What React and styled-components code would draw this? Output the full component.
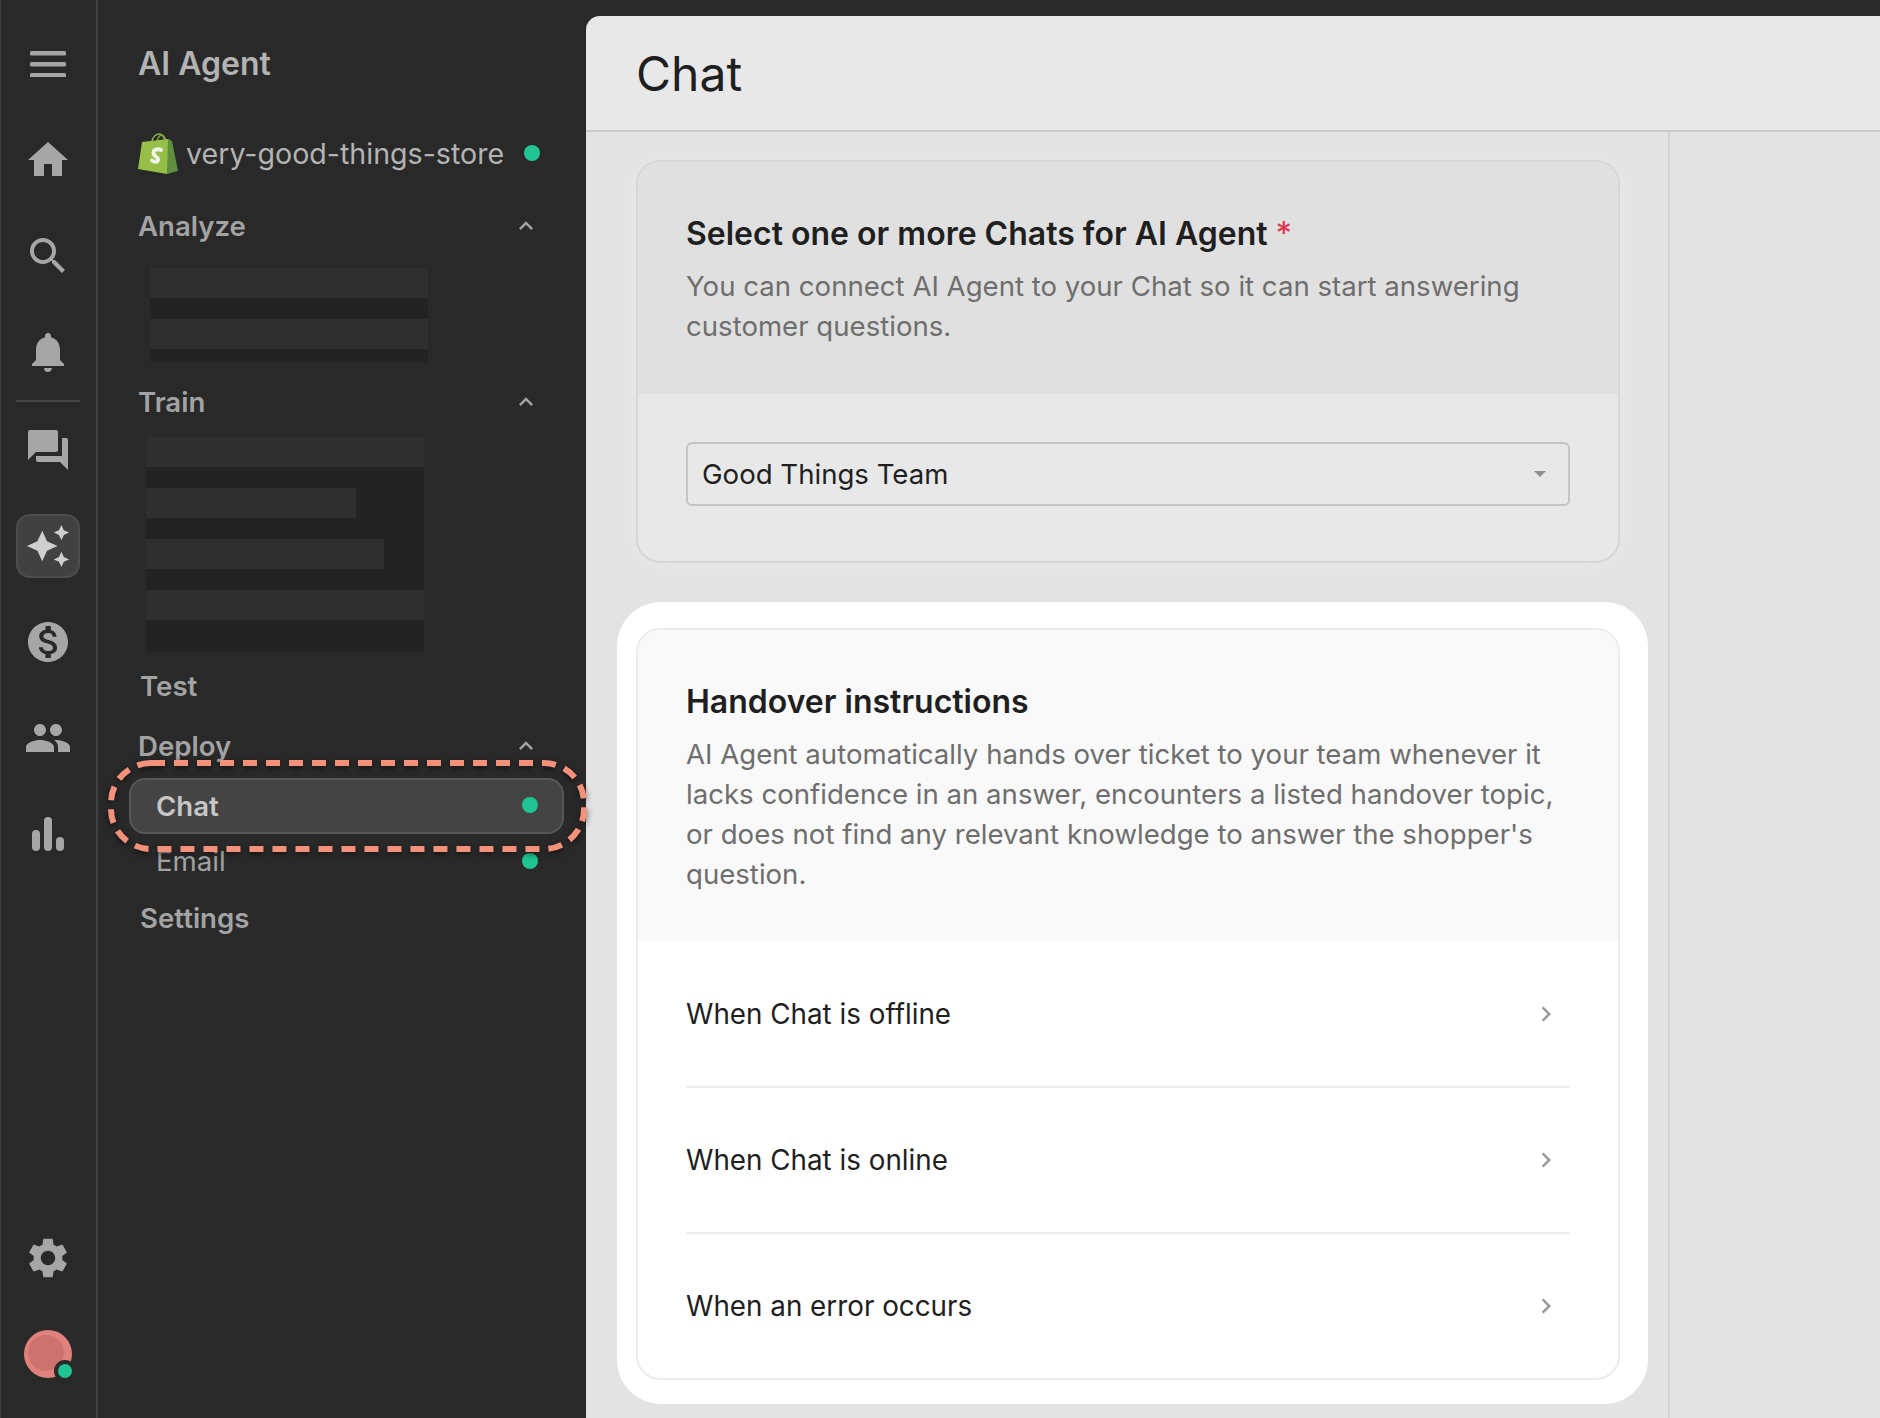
import styled, { createGlobalStyle } from 'styled-components';
import {
  MdHome,
  MdSearch,
  MdNotifications,
  MdForum,
  MdAutoAwesome,
  MdMonetizationOn,
  MdPeople,
  MdSettings,
  MdKeyboardArrowUp,
  MdChevronRight,
} from 'react-icons/md';

const EstilosGlobales = createGlobalStyle`
  html, body {
    background: #292929;
    height: 100%;
    margin: 0;
    overflow: hidden;
  }

  * {
    box-sizing: border-box;
  }

  #root {
    height: 100%;
  }
`;

const MenuIcon = () => (
  <svg width="36" height="26" viewBox="0 0 36 26" fill="#a6a6a6">
    <rect y="0" width="36" height="4.5" rx="1.5" />
    <rect y="11" width="36" height="4.5" rx="1.5" />
    <rect y="22" width="36" height="4.5" rx="1.5" />
  </svg>
);

const ChartIcon = () => (
  <svg width="32" height="34" viewBox="0 0 32 34" fill="#a6a6a6">
    <rect x="0" y="13" width="8" height="21" rx="4" />
    <rect x="12" y="0" width="8" height="34" rx="4" />
    <rect x="24" y="20" width="8" height="14" rx="4" />
  </svg>
);

const ShopifyLogo = () => (
  <svg width="41" height="42" viewBox="0 0 41 42">
    <path d="M14 9c1-4 4-7 7-7s5 3 6 7" fill="none" stroke="#8fb34a" strokeWidth="1.6" />
    <path d="M19 9c1-3 3-6 5-6s3 3 4 6" fill="none" stroke="#7da63c" strokeWidth="1.4" />
    <path d="M4 10l26-3 3 2-4 33L0 37z" fill="#95bf47" />
    <path d="M30 7l4 2 6 30-11 3z" fill="#5e8e3e" />
    <path d="M23 18c-1.500-1-7-1.500-7.500 2.500-.5 4 5 4 4.500 7.500-.4 2.500-4 2-6 .5" fill="none" stroke="#f2f2e8" strokeWidth="4" strokeLinecap="round" />
  </svg>
);

const App = () => (
  <>
    <EstilosGlobales />
    <Pagina>
      <Riel>
        <RielItem><MenuIcon /></RielItem>
        <RielItem><MdHome size={48} /></RielItem>
        <RielItem><MdSearch size={48} /></RielItem>
        <RielItem><MdNotifications size={48} /></RielItem>
        <RielDivisor />
        <RielItem><MdForum size={48} /></RielItem>
        <RielItem>
          <RielActivo><MdAutoAwesome size={46} /></RielActivo>
        </RielItem>
        <RielItem><MdMonetizationOn size={48} /></RielItem>
        <RielItem><MdPeople size={48} /></RielItem>
        <RielItem><ChartIcon /></RielItem>
        <RielAbajo>
          <RielItem><MdSettings size={48} /></RielItem>
          <RielItem>
            <Avatar>
              <AvatarCentro />
              <AvatarEstado />
            </Avatar>
          </RielItem>
        </RielAbajo>
      </Riel>

      <Barra>
        <BarraTitulo>AI Agent</BarraTitulo>
        <Tienda>
          <ShopifyLogo />
          <span>very-good-things-store</span>
          <Punto />
        </Tienda>

        <Seccion $mt={24}>
          Analyze
          <MdKeyboardArrowUp size={28} />
        </Seccion>
        <Esqueleto $mt={18} $ml={12} $alto={94}>
          <BarraGris $ancho={278} />
          <BarraGris $ancho={278} />
        </Esqueleto>

        <Seccion $mt={16}>
          Train
          <MdKeyboardArrowUp size={28} />
        </Seccion>
        <Esqueleto $mt={11} $ml={8} $alto={215}>
          <BarraGris $ancho={278} />
          <BarraGris $ancho={210} />
          <BarraGris $ancho={238} />
          <BarraGris $ancho={278} />
        </Esqueleto>

        <Enlace $mt={10}>Test</Enlace>
        <Seccion $mt={12}>
          Deploy
          <MdKeyboardArrowUp size={28} />
        </Seccion>

        <Pastilla>
          <span>Chat</span>
          <Punto />
          <Resalte width="479" height="92" viewBox="0 0 479 92">
            <rect
              x="3"
              y="3"
              width="473"
              height="86"
              rx="40"
              fill="none"
              stroke="#f4917b"
              strokeWidth="6"
              strokeDasharray="14 9"
            />
          </Resalte>
        </Pastilla>
        <SubEnlace>
          <span>Email</span>
          <Punto />
        </SubEnlace>
        <Enlace $mt={9}>Settings</Enlace>
      </Barra>

      <Principal>
        <Cabecera>
          <Titulo>Chat</Titulo>
        </Cabecera>
        <Contenido>
          <Columna>
            <Tarjeta $tenue>
              <TarjetaCabeza $tenue>
                <TarjetaTitulo>
                  Select one or more Chats for AI Agent <Requerido>*</Requerido>
                </TarjetaTitulo>
                <Descripcion>
                  You can connect AI Agent to your Chat so it can start answering
                  customer questions.
                </Descripcion>
              </TarjetaCabeza>
              <TarjetaCuerpo>
                <Selector>
                  Good Things Team
                  <Flechita />
                </Selector>
              </TarjetaCuerpo>
            </Tarjeta>

            <Foco>
              <Tarjeta>
                <TarjetaCabeza>
                  <TarjetaTitulo>Handover instructions</TarjetaTitulo>
                  <Descripcion>
                    AI Agent automatically hands over ticket to your team whenever it
                    lacks confidence in an answer, encounters a listed handover topic,
                    or does not find any relevant knowledge to answer the shopper's
                    question.
                  </Descripcion>
                </TarjetaCabeza>
                <Lista>
                  <Fila>
                    When Chat is offline
                    <MdChevronRight size={30} />
                  </Fila>
                  <Fila>
                    When Chat is online
                    <MdChevronRight size={30} />
                  </Fila>
                  <Fila>
                    When an error occurs
                    <MdChevronRight size={30} />
                  </Fila>
                </Lista>
              </Tarjeta>
            </Foco>
          </Columna>
          <PanelDerecho />
        </Contenido>
      </Principal>
    </Pagina>
  </>
);

export default App;

const Pagina = styled.div`
  background: #292929;
  display: flex;
  font-family: 'Inter', 'Liberation Sans', sans-serif;
  height: 1418px;
  overflow: hidden;
  width: 1880px;
`;

const Riel = styled.nav`
  align-items: center;
  border-left: 1px solid #3d3d3d;
  border-right: 2px solid #424242;
  color: #a6a6a6;
  display: flex;
  flex-direction: column;
  flex-shrink: 0;
  height: 100%;
  padding: 16px 2px 16px 0;
  width: 98px;
`;

const RielItem = styled.div`
  align-items: center;
  display: flex;
  flex-shrink: 0;
  height: 96px;
  justify-content: center;
  width: 100%;
`;

const RielDivisor = styled.div`
  background: #454545;
  flex-shrink: 0;
  height: 2px;
  width: 64px;
`;

const RielActivo = styled.div`
  align-items: center;
  background: #414141;
  border: 2px solid #4d4d4d;
  border-radius: 14px;
  color: #cfcfcf;
  display: flex;
  height: 64px;
  justify-content: center;
  width: 64px;
`;

const RielAbajo = styled.div`
  margin-top: auto;
  width: 100%;
`;

const Avatar = styled.div`
  align-items: center;
  background: #e0827b;
  border-radius: 50%;
  display: flex;
  height: 48px;
  justify-content: center;
  position: relative;
  width: 48px;
`;

const AvatarCentro = styled.div`
  background: #cc736e;
  border-radius: 50%;
  height: 36px;
  margin: -3px 0 0 -3px;
  width: 36px;
`;

const AvatarEstado = styled.div`
  background: #1fc492;
  border: 4px solid #292929;
  border-radius: 50%;
  bottom: -4px;
  height: 22px;
  position: absolute;
  right: -4px;
  width: 22px;
`;

const Barra = styled.aside`
  color: #a3a3a3;
  display: flex;
  flex-direction: column;
  flex-shrink: 0;
  padding-left: 40px;
  width: 488px;
`;

const BarraTitulo = styled.div`
  align-items: center;
  color: #b3b3b3;
  display: flex;
  font-size: 32px;
  font-weight: 600;
  height: 126px;
`;

const Tienda = styled.div`
  align-items: center;
  color: #b3b3b3;
  display: flex;
  font-size: 28.6px;
  gap: 7px;
  height: 50px;
  margin-top: 2px;
  padding-right: 46px;

  span:first-of-type {
    flex: 1;
  }
`;

const Punto = styled.i`
  background: #1fc492;
  border-radius: 50%;
  flex-shrink: 0;
  height: 16px;
  width: 16px;
`;

const Seccion = styled.div`
  align-items: center;
  display: flex;
  font-size: 27.6px;
  font-weight: 600;
  height: 48px;
  justify-content: space-between;
  margin-top: ${({ $mt }) => $mt}px;
  padding-right: 46px;
`;

const Esqueleto = styled.div`
  background: #232323;
  display: flex;
  flex-direction: column;
  gap: 21px;
  height: ${({ $alto }) => $alto}px;
  margin-left: ${({ $ml }) => $ml}px;
  margin-top: ${({ $mt }) => $mt}px;
  width: 278px;
`;

const BarraGris = styled.div`
  background: #2f2f2f;
  flex-shrink: 0;
  height: 30px;
  width: ${({ $ancho }) => $ancho}px;
`;

const Enlace = styled.div`
  align-items: center;
  display: flex;
  font-size: 27.6px;
  font-weight: 600;
  height: 48px;
  margin-top: ${({ $mt }) => $mt}px;
  padding-left: 2px;
`;

const Pastilla = styled.div`
  align-items: center;
  background: #444444;
  border: 2px solid #575757;
  border-radius: 16px;
  color: #c6c6c6;
  display: flex;
  font-size: 27.6px;
  font-weight: 600;
  height: 56px;
  justify-content: space-between;
  margin: 8px 0 0 -9px;
  padding: 0 24px 0 25px;
  position: relative;
  width: 435px;

  ${Punto} {
    margin-top: -2px;
  }
`;

const Resalte = styled.svg`
  filter: drop-shadow(0 2px 3px rgba(0, 0, 0, 0.6));
  left: -23px;
  position: absolute;
  top: -20px;
`;

const SubEnlace = styled.div`
  align-items: center;
  display: flex;
  font-size: 27.6px;
  height: 48px;
  justify-content: space-between;
  margin: 3px 0 0 18px;
  padding-right: 48px;
`;

const Principal = styled.main`
  background: #e8e8e8;
  border-top-left-radius: 14px;
  display: flex;
  flex: 1;
  flex-direction: column;
  height: 1402px;
  margin-top: 16px;
  overflow: hidden;
`;

const Cabecera = styled.header`
  align-items: center;
  border-bottom: 2px solid #c9c9c9;
  display: flex;
  flex-shrink: 0;
  height: 116px;
  padding-left: 50px;
`;

const Titulo = styled.h1`
  color: #1f1f1f;
  font-size: 48px;
  font-weight: 400;
  margin: 0;
`;

const Contenido = styled.div`
  display: flex;
  flex: 1;
  min-height: 0;
`;

const Columna = styled.div`
  background: #e3e3e3;
  border-right: 2px solid #d4d4d4;
  flex-shrink: 0;
  padding: 28px 0 0 50px;
  width: 1084px;
`;

const PanelDerecho = styled.div`
  background: #e3e3e3;
  flex: 1;
`;

const Tarjeta = styled.section`
  background: ${({ $tenue }) => ($tenue ? '#e8e8e8' : '#ffffff')};
  border: 2px solid ${({ $tenue }) => ($tenue ? '#d6d6d6' : '#ececec')};
  border-radius: 24px;
  box-shadow: ${({ $tenue }) => ($tenue ? '0 0 24px rgba(255, 255, 255, 0.3)' : 'none')};
  overflow: hidden;
  width: 984px;
`;

const TarjetaCabeza = styled.div`
  background: ${({ $tenue }) => ($tenue ? '#e0e0e0' : '#f9f9f9')};
  display: flex;
  flex-direction: column;
  gap: 12px;
  padding: 52px 48px ${({ $tenue }) => ($tenue ? '48px' : '47px')};
`;

const TarjetaTitulo = styled.h2`
  color: #1f1f1f;
  font-size: 32px;
  font-weight: 600;
  line-height: 40px;
  margin: 0;
`;

const Requerido = styled.span`
  color: #e0344f;
  font-weight: 400;
`;

const Descripcion = styled.p`
  color: #6e6e6e;
  font-size: 27.6px;
  font-weight: 400;
  line-height: 40px;
  margin: 0;
`;

const TarjetaCuerpo = styled.div`
  padding: 48px 48px 55px;
`;

const Selector = styled.div`
  align-items: center;
  border: 2px solid #c4c4c4;
  border-radius: 6px;
  color: #1f1f1f;
  display: flex;
  font-size: 27.6px;
  height: 64px;
  justify-content: space-between;
  padding: 0 22px 0 14px;
`;

const Flechita = styled.i`
  border-left: 6px solid transparent;
  border-right: 6px solid transparent;
  border-top: 6px solid #8f8f8f;
  height: 0;
  width: 0;
`;

const Foco = styled.div`
  background: #ffffff;
  border-radius: 44px;
  margin: 39px 0 0 -19px;
  padding: 26px 28px 24px 19px;
  width: 1031px;
`;

const Lista = styled.div`
  display: flex;
  flex-direction: column;
  padding: 0 48px;
`;

const Fila = styled.div`
  align-items: center;
  border-bottom: 2px solid #ececec;
  color: #1f1f1f;
  display: flex;
  font-size: 27.8px;
  height: 146px;
  justify-content: space-between;

  &:first-child {
    height: 147px;
  }

  &:last-child {
    border-bottom: none;
    height: 144px;
  }

  svg {
    color: #9a9a9a;
    margin-right: 9px;
  }
`;
